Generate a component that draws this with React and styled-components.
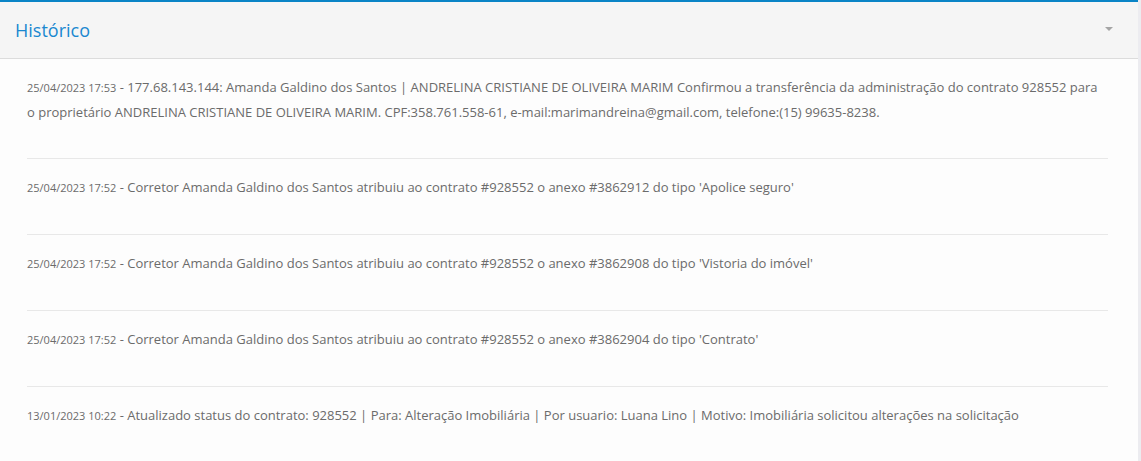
import React from "react";
import styled, { createGlobalStyle } from "styled-components";

const Global = createGlobalStyle`
  html, body { margin: 0; padding: 0; background: #ececf0; }
  body { font-family: "Open Sans", "Noto Sans", sans-serif; }
  * { box-sizing: border-box; }
`;

const Panel = styled.section`
  width: 1138px;
  background: #fdfdfd;
  border-top: 2px solid #0a84c6;
  min-height: 461px;
`;

const Header = styled.header`
  display: flex;
  align-items: center;
  justify-content: space-between;
  height: 57px;
  padding: 0 25px 0 15px;
  background: #f5f5f5;
  border-bottom: 1px solid #dcdcdc;
`;

const Title = styled.h2`
  margin: 0;
  font-size: 18px;
  font-weight: 400;
  color: #1a88d0;
  margin-top: -1px;
`;

const Caret = styled.span`
  display: block;
  width: 0;
  height: 0;
  border-top: 4px solid #a5a5a5;
  border-left: 4px solid transparent;
  border-right: 4px solid transparent;
  margin-top: -2px;
`;

const Body = styled.div`
  padding: 0 30px 0 27px;
`;

const Entry = styled.div`
  padding: 16px 0 34px;
  border-bottom: 1px solid #e8e8e8;
  font-size: 13px;
  line-height: 25px;
  color: #6b6b6b;

  &:first-child {
    padding-bottom: 33px;
  }
  &:last-child {
    border-bottom: none;
  }
`;

const Stamp = styled.span`
  font-size: 11px;
`;

const entries = [
  {
    date: "25/04/2023 17:53",
    text:
      " - 177.68.143.144: Amanda Galdino dos Santos | ANDRELINA CRISTIANE DE OLIVEIRA MARIM Confirmou a transferência da administração do contrato 928552 para o proprietário ANDRELINA CRISTIANE DE OLIVEIRA MARIM. CPF:358.761.558-61, e-mail:marimandreina@gmail.com, telefone:(15) 99635-8238.",
  },
  {
    date: "25/04/2023 17:52",
    text:
      " - Corretor Amanda Galdino dos Santos atribuiu ao contrato #928552 o anexo #3862912 do tipo 'Apolice seguro'",
  },
  {
    date: "25/04/2023 17:52",
    text:
      " - Corretor Amanda Galdino dos Santos atribuiu ao contrato #928552 o anexo #3862908 do tipo 'Vistoria do imóvel'",
  },
  {
    date: "25/04/2023 17:52",
    text:
      " - Corretor Amanda Galdino dos Santos atribuiu ao contrato #928552 o anexo #3862904 do tipo 'Contrato'",
  },
  {
    date: "13/01/2023 10:22",
    text:
      " - Atualizado status do contrato: 928552 | Para: Alteração Imobiliária | Por usuario: Luana Lino | Motivo: Imobiliária solicitou alterações na solicitação",
  },
];

export default function App() {
  return (
    <>
      <Global />
      <Panel>
        <Header>
          <Title>Histórico</Title>
          <Caret />
        </Header>
        <Body>
          {entries.map((e, i) => (
            <Entry key={i}>
              <Stamp>{e.date}</Stamp>
              {e.text}
            </Entry>
          ))}
        </Body>
      </Panel>
    </>
  );
}
